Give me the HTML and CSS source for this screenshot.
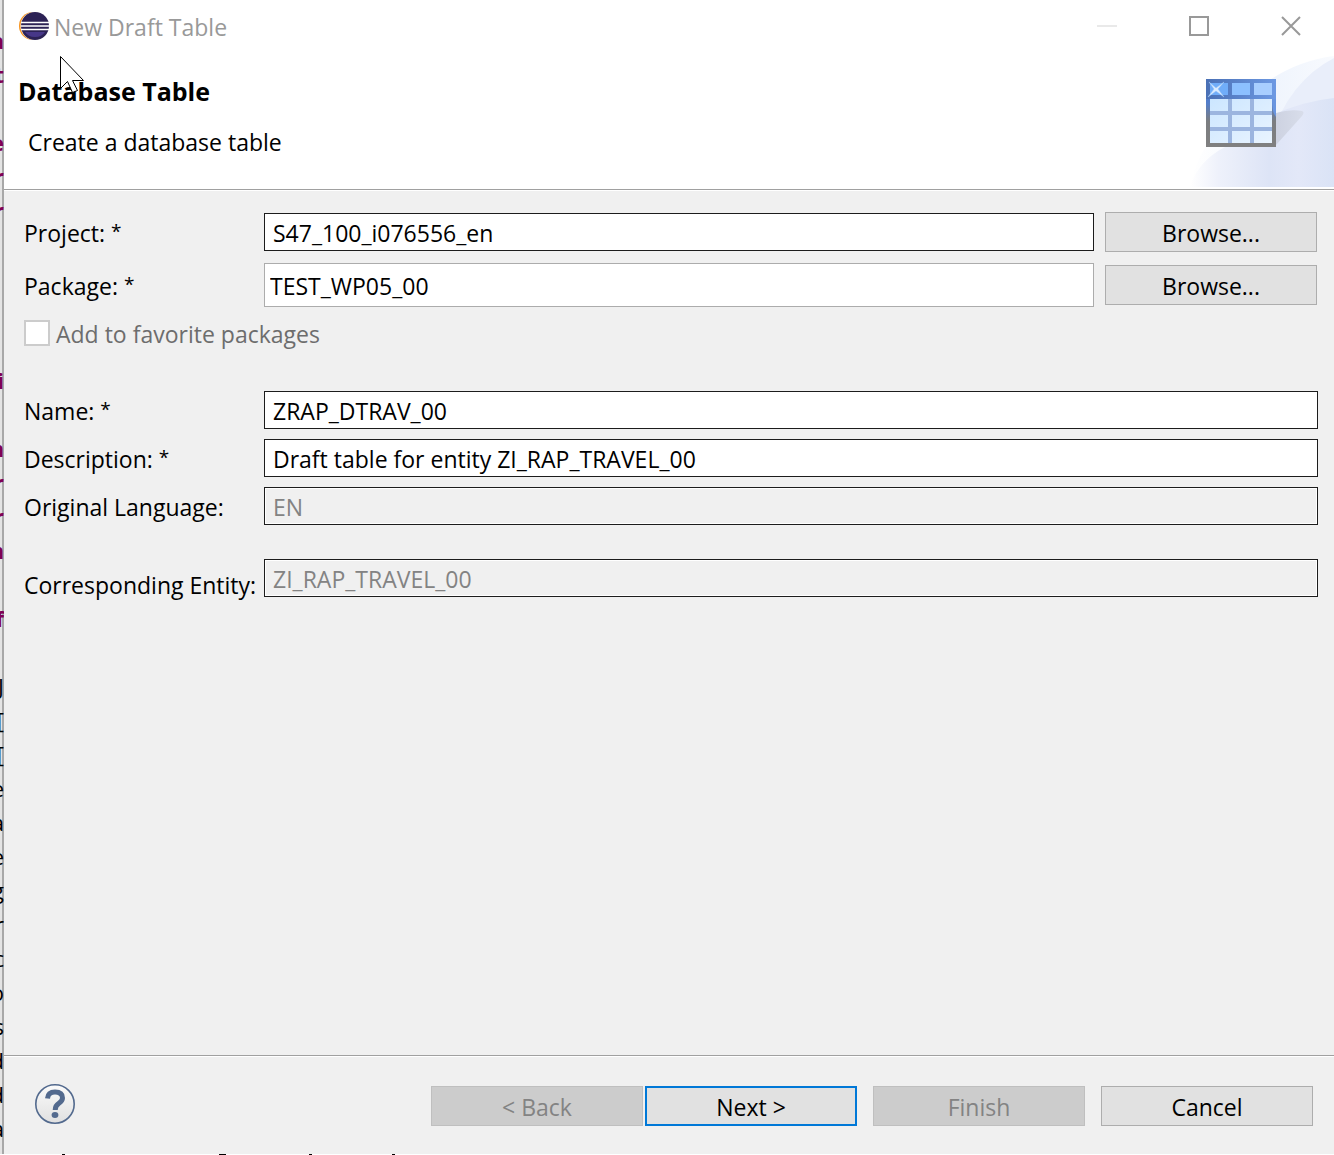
FILE: index.html
```html
<!DOCTYPE html>
<html lang="en">
<head>
<meta charset="utf-8">
<title>New Draft Table</title>
<link rel="stylesheet" href="styles.css">
</head>
<body>
<div class="desktop">
<aside class="editor" aria-hidden="true"><pre class="code"><span class="kw">a
t

e
r
r




i

m
r
r
m

f</span>

J
[
[
e
a
e
g
r
c
o
s
d
d
a</pre></aside>
<form class="dialog">
  <header class="titlebar">
    <svg class="app-icon" width="30" height="28" viewBox="0 0 30 28">
      <circle cx="14" cy="14" r="14" fill="#f7941e"/>
      <circle cx="15.500" cy="14" r="14" fill="#fff"/>
      <circle cx="16" cy="14" r="14" fill="#2c2255"/>
      <path d="M6 20h20q-3 5-10 5T6 20z" fill="#473788"/>
      <path d="M2 10.500h28M2 14h28M2 17.500h28" stroke="#fff" stroke-width="1.600"/>
    </svg>
    <span class="title">New Draft Table</span>
    <div class="window-buttons">
      <button type="button" class="window-button" aria-label="Minimize"><svg width="20" height="20"><path d="M0 10h20" stroke="#e9e9e9" stroke-width="2"/></svg></button>
      <button type="button" class="window-button" aria-label="Maximize"><svg width="20" height="20"><path d="M1 1h18v18H1z" fill="none" stroke="#999" stroke-width="2"/></svg></button>
      <button type="button" class="window-button" aria-label="Close"><svg width="20" height="20"><path d="M1 1l18 18M19 1L1 19" stroke="#999" stroke-width="2"/></svg></button>
    </div>
  </header>
  <section class="banner">
    <div class="banner-text">
      <h1>Database Table</h1>
      <p>Create a database table</p>
    </div>
    <svg class="banner-art" width="144" height="131" viewBox="0 0 144 131">
      <defs>
        <linearGradient id="glow"><stop offset="0" stop-color="#fff"/><stop offset=".2" stop-color="#eef1fb"/><stop offset=".55" stop-color="#dde4f6"/><stop offset=".75" stop-color="#e3e8f8"/><stop offset="1" stop-color="#dae3f6"/></linearGradient>
        <linearGradient id="haze"><stop offset="0" stop-color="#fff"/><stop offset=".6" stop-color="#f0f5fd"/><stop offset="1" stop-color="#f8fafe"/></linearGradient>
        <linearGradient id="frame" x2="0" y2="1"><stop offset="0" stop-color="#4870b6"/><stop offset=".35" stop-color="#537ecb"/><stop offset=".62" stop-color="#7b7d80"/><stop offset="1" stop-color="#808080"/></linearGradient>
        <linearGradient id="head"><stop offset="0" stop-color="#4a70b5"/><stop offset="1" stop-color="#6d99e3"/></linearGradient>
        <linearGradient id="cell" x2="1" y2="1"><stop offset="0" stop-color="#cce6ff"/><stop offset="1" stop-color="#e9f4ff"/></linearGradient>
        <linearGradient id="shade"><stop offset="0" stop-color="#cdd2e1"/><stop offset="1" stop-color="#d8ddea"/></linearGradient>
      </defs>
      <path d="M0 131Q8 94 27 78Q74 9 144 0v131z" fill="url(#haze)"/>
      <path d="M70 131Q82 34 144 2v129z" fill="#e9eefa"/>
      <path d="M0 131Q8 105 35 91Q84 48 144 42v89z" fill="url(#glow)"/>
      <path d="M86 57q14-4 26-2q3 1 0 5L86 89z" fill="url(#shade)"/>
      <path d="M16 23h70v68H16z" fill="url(#frame)"/>
      <path d="M16 23h70v20H16z" fill="url(#head)"/>
      <path d="M82 43h4v18q-4-4-4-18z" fill="#6995e0"/>
      <path d="M20 43h62v44H20z" fill="#9cb5df"/>
      <path d="M20 27h18v12H20z" fill="#70adf9"/><path d="M42 27h18v12H42z" fill="#8cc0ff"/><path d="M64 27h18v12H64z" fill="#a8ceff"/>
      <path d="M20 43h18v12H20zM42 43h18v12H42zM64 43h18v12H64zM20 59h18v12H20zM42 59h18v12H42zM64 59h18v12H64zM20 75h18v12H20zM42 75h18v12H42zM64 75h18v12H64z" fill="url(#cell)"/>
      <path d="M19 26l7 6 8-6-6 7 6 8-8-6-8 6 6-8z" fill="#dcecff" stroke="#9fc6f5" stroke-width=".5"/>
    </svg>
  </section>
  <main class="content">
    <div class="group with-browse">
      <label for="project">Project: <span class="star">*</span></label>
      <input class="field" id="project" value="S47_100_i076556_en">
      <button type="button" class="button">Browse...</button>
      <label for="package">Package: <span class="star">*</span></label>
      <input class="field combo" id="package" value="TEST_WP05_00">
      <button type="button" class="button">Browse...</button>
    </div>
    <label class="favorite"><input type="checkbox" disabled><span>Add to favorite packages</span></label>
    <div class="group">
      <label for="name">Name: <span class="star">*</span></label>
      <input class="field" id="name" value="ZRAP_DTRAV_00">
      <label for="description">Description: <span class="star">*</span></label>
      <input class="field" id="description" value="Draft table for entity ZI_RAP_TRAVEL_00">
      <label for="language">Original Language:</label>
      <input class="field" id="language" value="EN" disabled>
    </div>
    <div class="group entity">
      <label for="entity">Corresponding Entity:</label>
      <input class="field" id="entity" value="ZI_RAP_TRAVEL_00" disabled>
    </div>
  </main>
  <footer class="footer">
    <button type="button" class="help" aria-label="Help">
      <svg width="40" height="40" viewBox="0 0 40 40">
        <defs><linearGradient id="disc" x2="0" y2="1"><stop offset="0" stop-color="#fbfbfb"/><stop offset="1" stop-color="#e0e0e0"/></linearGradient></defs>
        <circle cx="20" cy="20" r="19.200" fill="url(#disc)" stroke="#536a8e" stroke-width="1.600"/>
        <path d="M12.500 14.500Q13 8 20 8q7.500 0 7.500 6 0 3-3.700 5.300Q20.200 21.500 20.200 26" fill="none" stroke="#536a8e" stroke-width="5"/>
        <ellipse cx="20" cy="31" rx="3.400" ry="2.900" fill="#536a8e"/>
      </svg>
    </button>
    <div class="steps">
      <button type="button" class="button" disabled>&lt; Back</button>
      <button type="button" class="button primary">Next &gt;</button>
    </div>
    <button type="button" class="button" disabled>Finish</button>
    <button type="button" class="button">Cancel</button>
  </footer>
  <svg class="pointer" width="26" height="38" viewBox="0 0 26 38"><path d="M.5.500v32l7-7 5 11 5-2-5-10h11z" fill="#fff" stroke="#000"/></svg>
</form>
</div>
</body>
</html>
```
FILE: styles.css
```css
* { box-sizing: border-box; }

body {
  margin: 0;
  background: #fff;
  color: #000;
  font: 23px/32px "Open Sans", "Noto Sans", sans-serif;
}

/* The bottom pixel row shows the tops of the letters behind the dialog. */
.desktop {
  display: flex;
  min-height: 100vh;
  padding-bottom: 1px;
  background:
    linear-gradient(#000, #000) 62px 100% / 3px 1px no-repeat,
    linear-gradient(#000, #000) 219px 100% / 7px 1px no-repeat,
    linear-gradient(#000, #000) 309px 100% / 3px 1px no-repeat,
    linear-gradient(#000, #000) 392px 100% / 3px 1px no-repeat,
    #fff;
}

.editor {
  position: relative;
  flex: none;
  width: 4px;
  overflow: hidden;
  background: linear-gradient(90deg, #e4e4e4 2px, #a8a8a8 2px);
}

.code {
  position: absolute;
  top: 23px;
  right: 0;
  margin: 0;
  font: 22px/34px "Open Sans", sans-serif;
  text-align: right;
}

.kw { color: #7f0055; font-weight: bold; }

.dialog {
  position: relative;
  display: flex;
  flex: 1;
  flex-direction: column;
  min-width: 0;
  background: #f0f0f0;
}

.titlebar {
  display: flex;
  align-items: center;
  height: 56px;
  padding: 0 0 4px 15px;
  background: #fff;
  color: #999;
}

.title { flex: 1; padding: 2px 0 0 5px; }

.window-buttons { display: flex; gap: 6px; }

.window-button {
  display: grid;
  place-items: center;
  width: 86px;
  height: 52px;
  padding: 0;
  border: 0;
  background: none;
}

.banner {
  display: flex;
  justify-content: space-between;
  height: 135px;
  border-bottom: 1px solid #fff;
  background: linear-gradient(#a0a0a0, #a0a0a0) bottom / 100% 1px no-repeat #fff;
}

.banner-text { padding: 19px 0 0 14px; }
h1 { margin: 0; font-size: 25px; line-height: 32px; }
p { margin: 19px 0 0 10px; }
.banner-art { flex: none; }

.content { flex: 1; padding: 21px 16px 0 20px; }

.group {
  display: grid;
  grid-template-columns: 230px 1fr;
  align-items: center;
  gap: 10px;
}

.group label { padding-top: 1px; white-space: nowrap; }
.star { font-size: 19px; line-height: 19px; vertical-align: 4px; }

.with-browse {
  grid-template-columns: 229px 1fr 212px;
  gap: 11px;
  padding-right: 1px;
}

.field {
  width: 100%;
  min-width: 0;
  height: 38px;
  padding: 2px 8px 0;
  border: 1px solid #1c1c1c;
  border-radius: 0;
  background: #fff;
  color: #000;
  font: inherit;
}

.field:disabled {
  border-color: #1c1c1c;
  background: #f0f0f0;
  color: #838383;
  box-shadow: inset 0 0 0 1px #fff;
}

.combo { height: 44px; padding-left: 5px; border-color: #acacac; }

.button {
  width: 212px;
  height: 40px;
  padding: 2px 0 0;
  border: 1px solid #adadad;
  background: #e1e1e1;
  color: #000;
  font: inherit;
}

.button:disabled { border-color: #bfbfbf; background: #ccc; color: #838383; }
.primary { border: 2px solid #0078d7; }

.favorite {
  display: flex;
  align-items: center;
  gap: 6px;
  height: 32px;
  margin: 10px 0 42px;
  color: #6d6d6d;
}

.favorite span { padding-top: 2px; }

.favorite input {
  appearance: none;
  width: 26px;
  height: 26px;
  margin: 0;
  border: 2px solid #ccc;
  background: #fff;
}

.entity { margin-top: 34px; align-items: start; }
.entity label { height: 38px; padding-top: 10px; }

.footer {
  display: flex;
  gap: 16px;
  height: 99px;
  padding: 30px 21px 0 31px;
  border-top: 1px solid #a0a0a0;
  box-shadow: inset 0 1px #fff;
}

.help {
  width: 40px;
  height: 40px;
  margin: -2px auto 0 0;
  padding: 0;
  border: 0;
  background: none;
}

.steps { display: flex; gap: 2px; }

.pointer { position: absolute; top: 56px; left: 56px; }
```
